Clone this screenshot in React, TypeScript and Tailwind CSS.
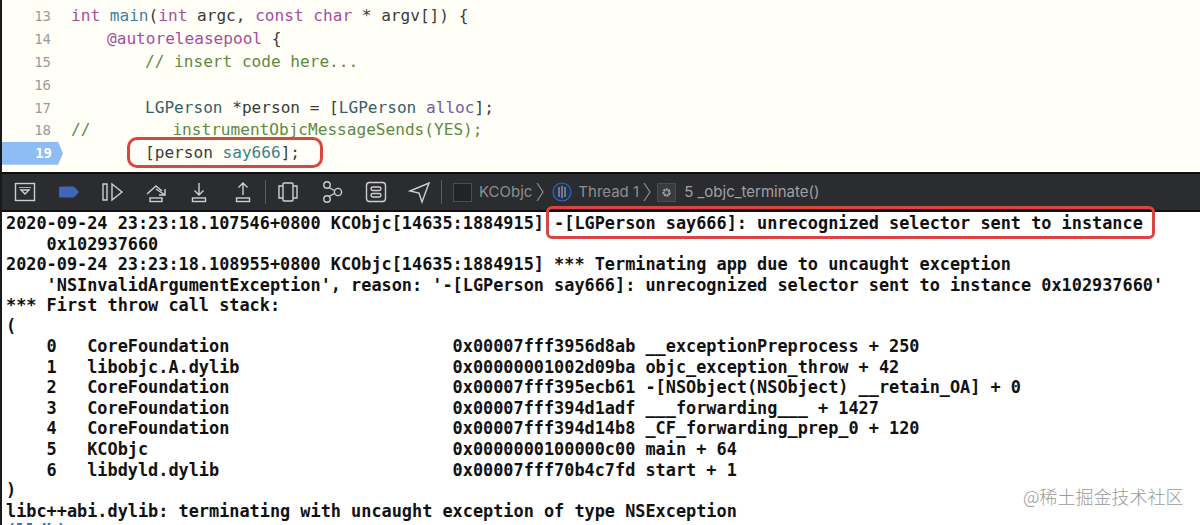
const mono = 'font-["DejaVu_Sans_Mono","Liberation_Mono",monospace]';

const kw = 'text-[#a44f9c]';
const fn = 'text-[#3f7fa5]';
const tx = 'text-[#3a3a3a]';
const cm = 'text-[#5c8a42]';
const cls = 'text-[#33606a]';
const sel = 'text-[#417f88]';

type Seg = [string, string];

const code: { n: number; indent: string; segs: Seg[] }[] = [
  { n: 13, indent: 'ml-[20px]', segs: [['int', kw], [' ', tx], ['main', fn], ['(', tx], ['int', kw], [' argc, ', tx], ['const', kw], [' ', tx], ['char', kw], [' * argv[]) {', tx]] },
  { n: 14, indent: 'ml-[56px]', segs: [['@autoreleasepool', kw], [' {', tx]] },
  { n: 15, indent: 'ml-[94px]', segs: [['// insert code here...', cm]] },
  { n: 16, indent: 'ml-[94px]', segs: [] },
  { n: 17, indent: 'ml-[94px]', segs: [['LGPerson', cls], [' *person = [', tx], ['LGPerson', cls], [' ', tx], ['alloc', 'text-[#6f5aa8]'], ['];', tx]] },
  { n: 18, indent: 'ml-[20px]', segs: [['//', cm]] },
  { n: 19, indent: 'ml-[82px]', segs: [['[person ', tx], ['say666', sel], ['];', tx]] },
];

const consoleLines = [
  '2020-09-24 23:23:18.107546+0800 KCObjc[14635:1884915] -[LGPerson say666]: unrecognized selector sent to instance',
  '    0x102937660',
  '2020-09-24 23:23:18.108955+0800 KCObjc[14635:1884915] *** Terminating app due to uncaught exception',
  "    'NSInvalidArgumentException', reason: '-[LGPerson say666]: unrecognized selector sent to instance 0x102937660'",
  '*** First throw call stack:',
  '(',
  '    0   CoreFoundation                      0x00007fff3956d8ab __exceptionPreprocess + 250',
  '    1   libobjc.A.dylib                     0x00000001002d09ba objc_exception_throw + 42',
  '    2   CoreFoundation                      0x00007fff395ecb61 -[NSObject(NSObject) __retain_OA] + 0',
  '    3   CoreFoundation                      0x00007fff394d1adf ___forwarding___ + 1427',
  '    4   CoreFoundation                      0x00007fff394d14b8 _CF_forwarding_prep_0 + 120',
  '    5   KCObjc                              0x0000000100000c00 main + 64',
  '    6   libdyld.dylib                       0x00007fff70b4c7fd start + 1',
  ')',
  'libc++abi.dylib: terminating with uncaught exception of type NSException',
];

function Tool({ children }: { children: React.ReactNode }) {
  return (
    <svg width="24" height="24" viewBox="0 0 24 24" fill="none" stroke="#cfcfcf" strokeWidth="1.4" className="shrink-0">
      {children}
    </svg>
  );
}

function Divider() {
  return <div className="h-[24px] w-px shrink-0 bg-[#5a5b5e]" />;
}

function Chevron() {
  return (
    <svg width="10" height="24" viewBox="0 0 10 24" fill="none" stroke="#8d8e90" strokeWidth="1.2" className="shrink-0">
      <path d="M2 3l6 9-6 9" />
    </svg>
  );
}

function Toolbar() {
  return (
    <div className="flex h-[40px] shrink-0 items-center border-y-2 border-[#101012] bg-[#2b2c2f] pl-[11px]">
      <div className="flex items-center gap-[19.6px]">
        <Tool>
          <rect x="2.5" y="3.5" width="19" height="17" />
          <path d="M8 10h8l-4 4z" />
          <path d="M6 7.5h12" strokeWidth="0.8" />
        </Tool>
        <Tool>
          <path d="M2 8a1.5 1.5 0 0 1 1.5-1.5H17l5 5.5-5 5.5H3.5A1.5 1.5 0 0 1 2 16z" fill="#3f66b8" stroke="none" />
        </Tool>
        <Tool>
          <path d="M3 4h4v16H3zM12 4l10 8-10 8z" />
        </Tool>
        <Tool>
          <path d="M3 14l9-8 6 5M21 9v6h-6M12 9l9 6" />
          <rect x="6" y="18" width="12" height="3.5" />
        </Tool>
        <Tool>
          <path d="M12 3v12M7.5 10.5L12 15l4.500-4.500" />
          <rect x="5.500" y="18" width="13" height="3.500" />
        </Tool>
        <Tool>
          <path d="M12 15V3M7.500 7.500L12 3l4.500 4.500" />
          <rect x="5.500" y="18" width="13" height="3.500" />
        </Tool>
      </div>
      <div className="ml-[10px] mr-[10px]">
        <Divider />
      </div>
      <div className="flex items-center gap-[20px]">
        <Tool>
          <rect x="7" y="3" width="10" height="18" rx="1" />
          <path d="M7 6H3v12h4M17 6h4v12h-4" />
        </Tool>
        <Tool>
          <circle cx="7" cy="5" r="3.2" />
          <circle cx="7" cy="19" r="3.2" />
          <circle cx="18" cy="12" r="3.6" />
          <path d="M9 7.500l5.500 3M9 16.500l5.500-3" />
        </Tool>
        <Tool>
          <rect x="2.500" y="2.500" width="19" height="19" rx="3" />
          <rect x="7" y="7" width="10" height="3.500" rx="1.700" />
          <rect x="7" y="13.500" width="10" height="3.500" rx="1.700" />
        </Tool>
        <Tool>
          <path d="M2 11L21 3l-7 19-3-9z" />
        </Tool>
      </div>
      <div className="ml-[9px] mr-[11px]">
        <Divider />
      </div>
      <div className="flex items-center font-['Inter',sans-serif] text-[15px] text-[#8d8e90]">
        <div className="h-[19px] w-[19px] shrink-0 border border-[#4c4d50] bg-[#222326]" />
        <span className="ml-[7px]">KCObjc</span>
        <span className="ml-[3px]">
          <Chevron />
        </span>
        <svg width="20" height="20" viewBox="0 0 20 20" fill="none" className="ml-[7px] shrink-0">
          <circle cx="10" cy="10" r="9" fill="#23324f" stroke="#3c66b5" strokeWidth="1.2" />
          <path d="M7 5v10M10 4v12M13 5v10" stroke="#a5a7ab" strokeWidth="1.2" />
        </svg>
        <span className="ml-[6px]">Thread 1</span>
        <span className="ml-[3px]">
          <Chevron />
        </span>
        <div className="ml-[5px] flex h-[19px] w-[19px] shrink-0 items-center justify-center border border-[#4c4d50] bg-[#3a3b3e]">
          <svg width="11" height="11" viewBox="0 0 11 11">
            <circle cx="5.500" cy="5.500" r="3" fill="none" stroke="#a5a7ab" strokeWidth="2.400" strokeDasharray="2 0.600" />
          </svg>
        </div>
        <span className="ml-[8px] text-[#a0a1a3]">5 _objc_terminate()</span>
      </div>
    </div>
  );
}

export default function App() {
  return (
    <div className="relative flex h-[525px] w-[1200px] flex-col overflow-hidden border-l-2 border-[#1a1a1a] bg-white">
      <div className={`h-[172px] shrink-0 overflow-hidden bg-[#fffff8] pt-[5px] text-[16.1px] ${mono}`}>
        {code.map((row) => (
          <div key={row.n} className="flex h-[22.8px] items-center whitespace-pre leading-none">
            {row.n === 19 ? (
              <div className="flex h-[23px] w-[61px] shrink-0 items-center justify-end bg-[#8fbcf5] pr-[11px] text-[14px] font-bold text-white [clip-path:polygon(0_0,56px_0,61px_50%,56px_100%,0_100%)]">
                {row.n}
              </div>
            ) : (
              <div className="w-[49px] shrink-0 text-right text-[14px] text-[#9b9b9b]">{row.n}</div>
            )}
            <div className={row.indent}>
              {row.segs.map(([t, c], i) => (
                <span key={i} className={c}>
                  {t}
                </span>
              ))}
              {row.n === 18 && <span className={`ml-[82px] ${cm}`}>instrumentObjcMessageSends(YES);</span>}
            </div>
          </div>
        ))}
      </div>
      <Toolbar />
      <div className={`flex-1 overflow-hidden pl-[4px] pt-[1px] text-[16.88px] font-bold text-[#111] ${mono}`}>
        {consoleLines.map((line, i) => (
          <div key={i} className="h-[20.55px] whitespace-pre leading-[20.55px]">
            {line}
          </div>
        ))}
        <div className="h-[20.55px] whitespace-pre leading-[20.55px] text-[#3b6fd1]">(lldb)</div>
      </div>
      <div className="absolute left-[125px] top-[137px] h-[31px] w-[196px] rounded-[10px] border-[3px] border-[#d9463f]" />
      <div className="absolute left-[544px] top-[206px] h-[33px] w-[609px] rounded-md border-[3px] border-[#d9463f]" />
      <div className="absolute left-[1021px] top-[483px] font-['Noto_Sans_CJK_SC',sans-serif] text-[18px] font-light text-[#9a9a9a]">
        @稀土掘金技术社区
      </div>
    </div>
  );
}
